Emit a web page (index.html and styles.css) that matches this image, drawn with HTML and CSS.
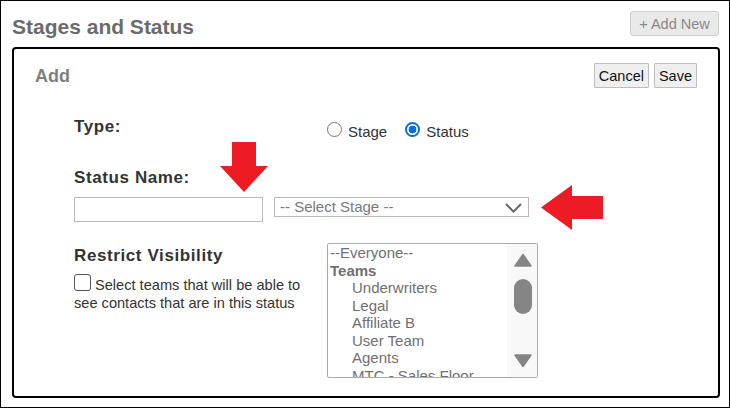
FILE: index.html
```html
<!DOCTYPE html>
<html lang="en">
<head>
<meta charset="utf-8">
<title>Stages and Status</title>
<link rel="stylesheet" href="styles.css">
</head>
<body>
<div class="page">
  <div class="header">
    <h1 class="title">Stages and Status</h1>
    <button class="btn-add" type="button">+ Add New</button>
  </div>
  <div class="panel">
    <div class="panel-head">
      <h2 class="panel-title">Add</h2>
      <div class="actions">
        <button class="btn" type="button">Cancel</button>
        <button class="btn" type="button">Save</button>
      </div>
    </div>
    <div class="form">
      <div class="row-type">
        <div class="label">Type:</div>
        <div class="radios">
          <label class="radio"><input type="radio" name="kind"><span>Stage</span></label>
          <label class="radio"><input type="radio" name="kind" checked><span>Status</span></label>
        </div>
      </div>
      <div class="label label-name">Status Name:</div>
      <div class="row-name">
        <input class="text-input" type="text">
        <div class="select">
          <span class="select-text">-- Select Stage --</span>
          <svg class="chevron" width="17" height="10" viewBox="0 0 17 10"><polyline points="1,1 8.5,8.6 16,1" fill="none" stroke="#666" stroke-width="2"/></svg>
        </div>
      </div>
      <div class="row-vis">
        <div class="vis-left">
          <div class="label">Restrict Visibility</div>
          <label class="check"><input type="checkbox">Select teams that will be able to see contacts that are in this status</label>
        </div>
        <div class="listbox">
          <div class="list-items">
            <div class="opt">--Everyone--</div>
            <div class="opt opt-group">Teams</div>
            <div class="opt opt-sub">Underwriters</div>
            <div class="opt opt-sub">Legal</div>
            <div class="opt opt-sub">Affiliate B</div>
            <div class="opt opt-sub">User Team</div>
            <div class="opt opt-sub">Agents</div>
            <div class="opt opt-sub">MTC - Sales Floor</div>
          </div>
          <div class="scrollbar">
            <svg class="sb-arrow" width="18" height="14" viewBox="0 0 18 14"><polygon points="9,1.5 17,13 1,13" fill="#858585" stroke="#858585" stroke-width="1.5" stroke-linejoin="round"/></svg>
            <div class="sb-thumb"></div>
            <svg class="sb-arrow sb-down" width="18" height="14" viewBox="0 0 18 14"><polygon points="1,1 17,1 9,12.5" fill="#858585" stroke="#858585" stroke-width="1.5" stroke-linejoin="round"/></svg>
          </div>
        </div>
      </div>
    </div>
  </div>
  <svg class="arrow arrow-down" width="48" height="50" viewBox="0 0 48 50"><polygon points="12,0 36,0 36,24 48,24 24,50 0,24 12,24" fill="#ed1c24"/></svg>
  <svg class="arrow arrow-left" width="62" height="45" viewBox="0 0 62 45"><polygon points="0,22.5 31,0 31,11 62,11 62,34 31,34 31,45" fill="#ed1c24"/></svg>
</div>
</body>
</html>
```

FILE: styles.css
```css
body {
  margin: 0;
  background: #fff;
  font-family: "Liberation Sans", Arial, sans-serif;
}

.page {
  position: relative;
  width: 730px;
  height: 408px;
  box-sizing: border-box;
  border: 1px solid #000;
  overflow: hidden;
}

.header {
  display: flex;
  justify-content: space-between;
  align-items: flex-start;
  height: 46px;
  padding: 0 10px 0 11px;
}

.title {
  margin: 14px 0 0;
  font-size: 21px;
  line-height: 24px;
  font-weight: bold;
  color: #6b6b6b;
}

.btn-add {
  margin-top: 10px;
  width: 89px;
  height: 25px;
  padding: 0;
  border: 1px solid #cfcfcf;
  border-radius: 3px;
  background: #e9e9e9;
  color: #8a8a8a;
  font-family: inherit;
  font-size: 14.5px;
}

.panel {
  margin-left: 11px;
  width: 708px;
  height: 351px;
  box-sizing: border-box;
  border: 2px solid #000;
  border-radius: 4px;
}

.panel-head {
  display: flex;
  justify-content: space-between;
  align-items: center;
  padding: 14px 21px 0 21px;
}

.panel-title {
  margin: 0;
  font-size: 18px;
  line-height: 22px;
  font-weight: bold;
  color: #7f7f7f;
}

.actions {
  display: flex;
  gap: 5px;
}

.btn {
  height: 25px;
  padding: 0 4px;
  border: 1px solid #bdbdbd;
  border-radius: 1px;
  background: #efefef;
  color: #111;
  font-family: inherit;
  font-size: 14.5px;
}

.form {
  margin-top: 29px;
  padding-left: 60px;
}

.label {
  font-size: 17px;
  line-height: 20px;
  font-weight: bold;
  letter-spacing: 0.6px;
  color: #333;
}

.row-type {
  display: grid;
  grid-template-columns: 253px 1fr;
  height: 20px;
}

.radios {
  display: flex;
  gap: 18px;
  margin-top: 5px;
}

.radio {
  display: flex;
  align-items: flex-start;
  font-size: 15px;
  line-height: 20px;
  color: #333;
}

.radio input {
  appearance: none;
  -webkit-appearance: none;
  width: 15px;
  height: 15px;
  margin: 0 6px 0 0;
  box-sizing: border-box;
  border: 1px solid #767676;
  border-radius: 50%;
  background: #fff;
}

.radio input:checked {
  border: 2px solid #0a6fd8;
  background: radial-gradient(circle, #0a6fd8 0 3.6px, #fff 4.2px);
}

.label-name {
  margin-top: 31px;
}

.row-name {
  display: flex;
  align-items: flex-start;
  margin-top: 9px;
}

.text-input {
  width: 189px;
  height: 25px;
  margin: 0;
  padding: 0;
  box-sizing: border-box;
  border: 1px solid #bbb;
}

.select {
  display: flex;
  align-items: center;
  justify-content: space-between;
  margin-left: 11px;
  width: 255px;
  height: 20px;
  box-sizing: border-box;
  border: 1px solid #bbb;
  padding: 0 6px 0 5px;
}

.select-text {
  font-size: 15px;
  line-height: 18px;
  color: #7a7a7a;
}

.chevron {
  display: block;
  margin-top: 1px;
}

.row-vis {
  display: grid;
  grid-template-columns: 253px 211px;
  margin-top: 21px;
}

.vis-left {
  padding-top: 3px;
}

.check {
  display: block;
  width: 235px;
  margin-top: 8px;
  font-size: 14.6px;
  line-height: 17.5px;
  color: #333;
}

.check input {
  appearance: none;
  -webkit-appearance: none;
  display: inline-block;
  width: 17px;
  height: 17px;
  margin: 0 4px 0 0;
  box-sizing: border-box;
  border: 1.5px solid #555;
  border-radius: 3px;
  background: #fff;
  vertical-align: -1px;
}

.listbox {
  display: flex;
  height: 135px;
  box-sizing: border-box;
  border: 1px solid #aaa;
  border-radius: 2px;
  overflow: hidden;
}

.list-items {
  flex: 1;
  padding-left: 2px;
  overflow: hidden;
  white-space: nowrap;
  font-size: 15px;
  line-height: 17.5px;
  color: #707070;
}

.opt-group {
  font-weight: bold;
}

.opt-sub {
  padding-left: 22px;
}

.scrollbar {
  display: flex;
  flex-direction: column;
  align-items: center;
  width: 30px;
  padding: 9px 0 0 1px;
  box-sizing: border-box;
  background: #f8f8f8;
}

.sb-arrow {
  display: block;
}

.sb-thumb {
  width: 18px;
  height: 35px;
  margin-top: 12px;
  border-radius: 9px;
  background: #858585;
}

.sb-down {
  margin-top: 40px;
}

.arrow {
  position: absolute;
  display: block;
}

.arrow-down {
  left: 219px;
  top: 141px;
}

.arrow-left {
  left: 540px;
  top: 184px;
}
```
